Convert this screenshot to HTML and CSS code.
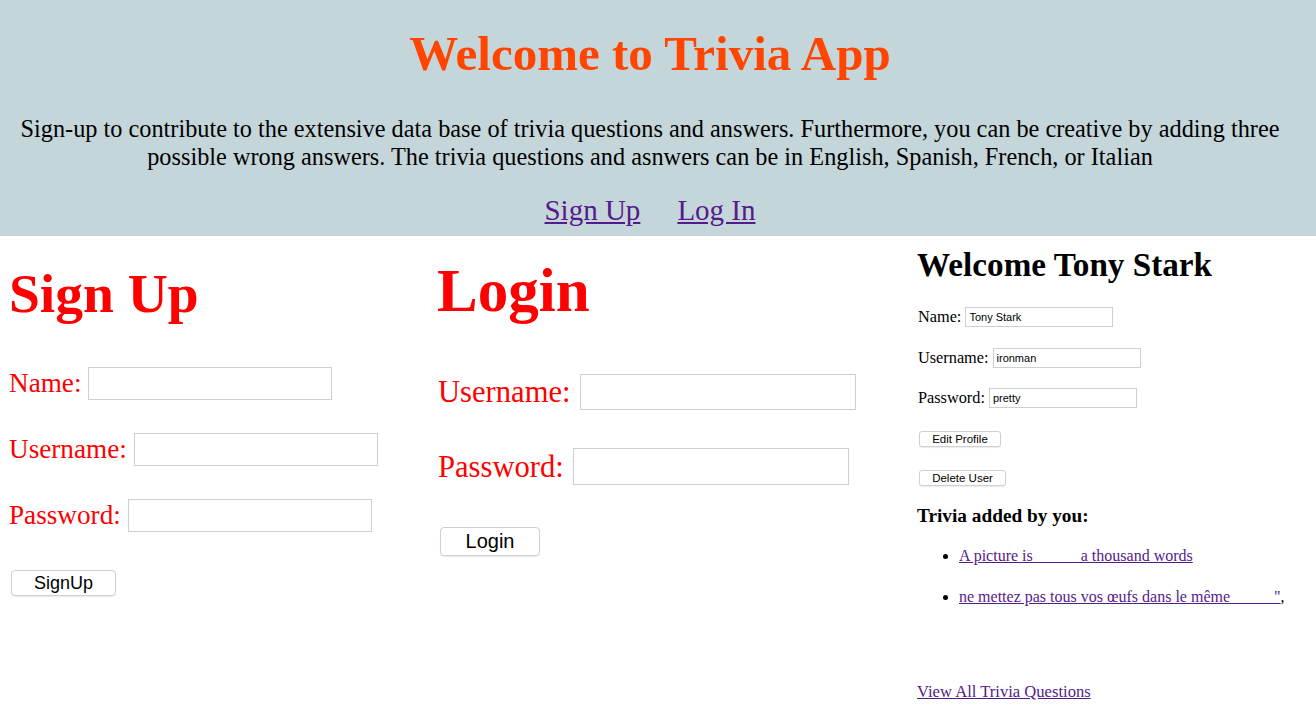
FILE: index.html
```html
<!DOCTYPE html>
<html>
<head>
<meta charset="utf-8">
<title>Trivia App</title>
<link rel="stylesheet" href="styles.css">
</head>
<body>
<header class="hero">
  <h1 class="hero-title">Welcome to Trivia App</h1>
  <p class="hero-text">Sign-up to contribute to the extensive data base of trivia questions and answers. Furthermore, you can be creative by adding three possible wrong answers. The trivia questions and asnwers can be in English, Spanish, French, or Italian</p>
  <nav class="hero-nav">
    <a href="#signup">Sign Up</a>
    <a href="#login">Log In</a>
  </nav>
</header>
<main class="columns">
  <section class="col col-signup" id="signup">
    <h1 class="signup-title">Sign Up</h1>
    <div class="su-row su-row-first"><label>Name:</label><input class="su-input" type="text"></div>
    <div class="su-row"><label>Username:</label><input class="su-input" type="text"></div>
    <div class="su-row"><label>Password:</label><input class="su-input" type="password"></div>
    <button class="btn btn-signup">SignUp</button>
  </section>
  <section class="col col-login" id="login">
    <h1 class="login-title">Login</h1>
    <div class="li-row li-row-first"><label>Username:</label><input class="li-input" type="text"></div>
    <div class="li-row"><label>Password:</label><input class="li-input" type="password"></div>
    <button class="btn btn-login">Login</button>
  </section>
  <section class="col col-profile">
    <h1 class="profile-title">Welcome Tony Stark</h1>
    <div class="pf-row pf-row-first"><label>Name:</label><input class="pf-input" type="text" value="Tony Stark"></div>
    <div class="pf-row"><label>Username:</label><input class="pf-input" type="text" value="ironman"></div>
    <div class="pf-row"><label>Password:</label><input class="pf-input" type="text" value="pretty"></div>
    <button class="btn btn-small btn-edit">Edit Profile</button>
    <button class="btn btn-small btn-delete">Delete User</button>
    <h3 class="trivia-title">Trivia added by you:</h3>
    <ul class="trivia-list">
      <li><a href="#">A picture is _____ a thousand words</a></li>
      <li><a href="#">ne mettez pas tous vos œufs dans le même _____"</a>,</li>
    </ul>
    <a class="view-all" href="#">View All Trivia Questions</a>
  </section>
</main>
</body>
</html>
```

FILE: styles.css
```css
html, body {
  margin: 0;
  padding: 0;
  background: #ffffff;
}
body {
  font-family: "Liberation Serif", "Times New Roman", serif;
  color: #000;
}
a {
  color: #551a8b;
}
.hero {
  background: #c4d6d9;
  text-align: center;
  padding: 26px 16px 9px 0;
}
.hero-title {
  margin: 0;
  font-size: 49px;
  line-height: 56px;
  font-weight: bold;
  color: #ff4500;
}
.hero-text {
  margin: 33px 0 0;
  font-size: 24.3px;
  line-height: 28px;
}
.hero-nav {
  margin-top: 22px;
  font-size: 29px;
  line-height: 34px;
  display: flex;
  justify-content: center;
  gap: 37px;
}
.columns {
  display: grid;
  grid-template-columns: 429px 480px 1fr;
  padding-left: 9px;
}
.col {
  display: flex;
  flex-direction: column;
  align-items: flex-start;
}
/* Sign up */
.signup-title {
  margin: 28px 0 0;
  font-size: 55.5px;
  line-height: 60px;
  color: #ff0000;
}
.su-row {
  display: flex;
  align-items: center;
  gap: 7px;
  height: 33px;
  margin-top: 33px;
  color: #ff0000;
  font-size: 27.2px;
  line-height: 33px;
}
.su-row-first {
  margin-top: 43px;
}
.su-input, .li-input, .pf-input {
  box-sizing: border-box;
  border: 1px solid #cfcfcf;
  border-radius: 0;
  background: #fff;
  margin: 0;
  padding: 0 3px;
  font-family: "Liberation Sans", Arial, sans-serif;
}
.su-input {
  width: 244px;
  height: 33px;
}
.btn {
  font-family: "Liberation Sans", Arial, sans-serif;
  background: #ffffff;
  border: 1px solid #d0d0d0;
  border-radius: 4px;
  box-shadow: 0 1px 1px rgba(0,0,0,0.08);
  color: #000;
  padding: 0;
  margin: 0;
  box-sizing: border-box;
}
.btn-signup {
  margin: 38px 0 0 2px;
  width: 105px;
  height: 26px;
  font-size: 18px;
  line-height: 24px;
}
/* Login */
.login-title {
  margin: 22px 0 0 -1px;
  font-size: 61px;
  line-height: 66px;
  color: #ff0000;
}
.li-row {
  display: flex;
  align-items: center;
  gap: 9px;
  margin-top: 38px;
  color: #ff0000;
  font-size: 30.6px;
  line-height: 36px;
  height: 37px;
}
.li-row-first {
  margin-top: 50px;
  height: 36px;
}
.li-input {
  width: 276px;
  height: 100%;
}
.btn-login {
  margin: 42px 0 0 2px;
  width: 100px;
  height: 29px;
  font-size: 20px;
  line-height: 27px;
}
/* Profile */
.profile-title {
  margin: 10px 0 0 -1px;
  font-size: 33.2px;
  line-height: 37px;
}
.pf-row {
  display: flex;
  align-items: center;
  gap: 4px;
  height: 20px;
  margin-top: 20.5px;
  font-size: 16.3px;
  line-height: 20px;
}
.pf-row-first {
  margin-top: 24px;
}
.pf-input {
  width: 148px;
  height: 20px;
  font-size: 11px;
  padding: 0 3px;
}
.btn-small {
  font-size: 11.5px;
  line-height: 14px;
  height: 16px;
  border-radius: 3px;
  margin-left: 1px;
}
.btn-edit {
  margin-top: 23px;
  width: 82px;
}
.btn-delete {
  margin-top: 23px;
  width: 87px;
}
.trivia-title {
  margin: 19px 0 0 -1px;
  font-size: 19.3px;
  line-height: 22px;
}
.trivia-list {
  margin: 20px 0 0;
  padding-left: 41px;
  font-size: 16px;
  line-height: 18px;
}
.trivia-list li + li {
  margin-top: 23px;
}
.view-all {
  margin: 77px 0 0 -1px;
  font-size: 16.6px;
  line-height: 18px;
}
```
